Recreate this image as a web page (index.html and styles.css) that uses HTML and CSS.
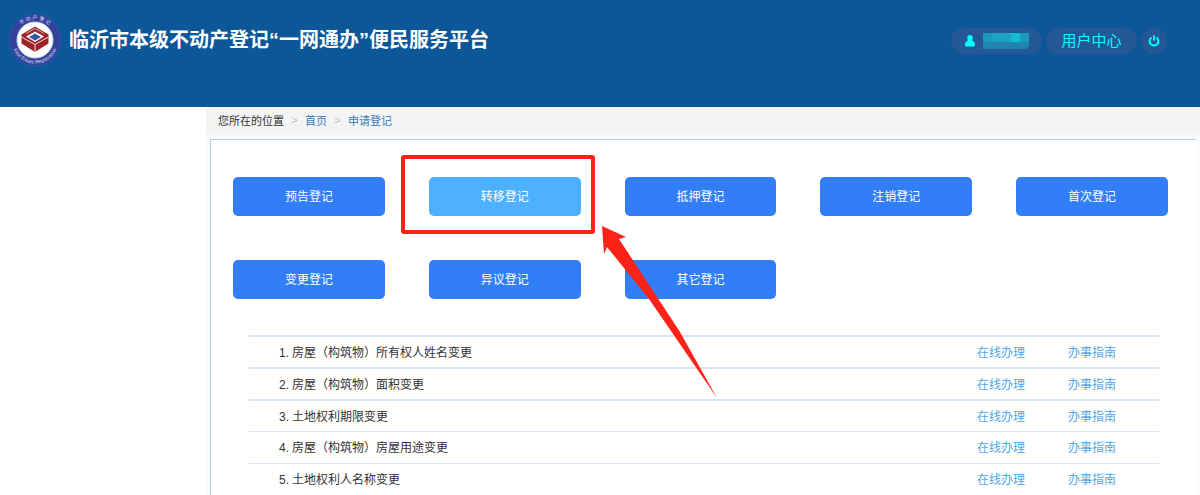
FILE: index.html
```
<!DOCTYPE html>
<html lang="zh-CN">
<head>
    <meta charset="UTF-8">
    <meta name="viewport" content="width=device-width, initial-scale=1.0">
    <title>临沂市本级不动产登记“一网通办”便民服务平台</title>
    <link rel="stylesheet" href="styles.css">
</head>
<body>
    <!-- 顶部 -->
    <header class="header">
        <div class="brand">
            <svg class="logo" viewBox="0 0 54 54" aria-hidden="true">
                <defs>
                    <path id="ringTop" d="M6.5 27a20.5 20.5 0 0 1 41 0"/>
                    <path id="ringBottom" d="M3.500 27a23.500 23.500 0 0 0 47 0"/>
                </defs>
                <circle cx="27" cy="27" r="26" fill="#33439c" stroke="#2a5aa5"/>
                <circle cx="27" cy="27" r="18" fill="#fff" stroke="#c9cfe8"/>
                <text class="logo-text"><textPath href="#ringTop" startOffset="50%" text-anchor="middle">不 动 产 登 记</textPath></text>
                <text class="logo-text"><textPath href="#ringBottom" startOffset="50%" text-anchor="middle">Real Estate Registration</textPath></text>
                <path d="M27 13.500l13.500 8v9L27 39l-13.500-8.500v-9z" fill="#9c2429"/>
                <path d="M27 18.500l9 5-9 5.500-9-5.500z" fill="#fff"/>
                <path d="M27 20.500l6 3.500-6 3.500-6-3.500z" fill="#3556a8"/>
                <path d="M18 20.500l9-5 9 5" fill="none" stroke="#d9a3a0"/>
                <path d="M13.500 24L27 31.500 40.500 24M27 31.500V39" fill="none" stroke="#f1d9d8"/>
            </svg>
            <h1 class="brand-title">临沂市本级不动产登记“一网通办”便民服务平台</h1>
        </div>
        <div class="user-bar">
            <a class="pill" href="#" aria-label="当前用户">
                <svg class="icon-user" viewBox="0 0 10 12" aria-hidden="true">
                    <path d="M5 0C3.200 0 2.300 1.300 2.300 3c0 1 .3 1.900.9 2.500C1.200 6 0 7.600 0 10c0 1 .6 1.500 1.500 1.500h7C9.400 11.500 10 11 10 10c0-2.400-1.200-4-3.200-4.500.6-.6.9-1.500.9-2.500C7.700 1.300 6.800 0 5 0z"/>
                </svg>
                <svg class="user-mask" viewBox="0 0 46 16" aria-hidden="true">
                    <path d="M0 0h46v13l-3 3H0z" fill="#1f86b2"/>
                    <path d="M0 0h46v9H0z" fill="#1ba3c4"/>
                    <path d="M0 0h9v9H0zM37 0h9v9h-9z" fill="#1b9abf"/>
                    <path d="M28 0h9v9h-9z" fill="#14bdd3"/>
                </svg>
            </a>
            <a class="pill pill-text" href="#">用户中心</a>
            <button class="pill pill-round" type="button" aria-label="退出">
                <svg class="icon-power" viewBox="0 0 12 12" aria-hidden="true">
                    <path d="M3.500 2.500a4.400 4.400 0 1 0 5 0M6 .5v5"/>
                </svg>
            </button>
        </div>
    </header>

    <!-- 主内容区域 -->
    <main class="main">
        <nav class="breadcrumb" aria-label="当前位置">
            <span>您所在的位置</span>
            <span class="sep">&gt;</span>
            <a href="#">首页</a>
            <span class="sep">&gt;</span>
            <a href="#">申请登记</a>
        </nav>

        <section class="panel">
            <!-- 登记类型 -->
            <div class="type-grid">
                <button class="type-btn" type="button">预告登记</button>
                <div class="type-current">
                    <button class="type-btn active" type="button">转移登记</button>
                    <div class="highlight">
                        <svg class="arrow" viewBox="0 0 116 172" aria-hidden="true">
                            <path d="M0 0l24 11-7 2 61 93 37 66-68-99L5 21l-3 7z"/>
                        </svg>
                    </div>
                </div>
                <button class="type-btn" type="button">抵押登记</button>
                <button class="type-btn" type="button">注销登记</button>
                <button class="type-btn" type="button">首次登记</button>
                <button class="type-btn" type="button">变更登记</button>
                <button class="type-btn" type="button">异议登记</button>
                <button class="type-btn" type="button">其它登记</button>
            </div>

            <!-- 办理事项 -->
            <table class="item-table">
                <tbody>
                    <tr>
                        <td class="item-name"><span class="num">1.</span>房屋（构筑物）所有权人姓名变更</td>
                        <td><a href="#">在线办理</a></td>
                        <td><a href="#">办事指南</a></td>
                    </tr>
                    <tr>
                        <td class="item-name"><span class="num">2.</span>房屋（构筑物）面积变更</td>
                        <td><a href="#">在线办理</a></td>
                        <td><a href="#">办事指南</a></td>
                    </tr>
                    <tr>
                        <td class="item-name"><span class="num">3.</span>土地权利期限变更</td>
                        <td><a href="#">在线办理</a></td>
                        <td><a href="#">办事指南</a></td>
                    </tr>
                    <tr>
                        <td class="item-name"><span class="num">4.</span>房屋（构筑物）房屋用途变更</td>
                        <td><a href="#">在线办理</a></td>
                        <td><a href="#">办事指南</a></td>
                    </tr>
                    <tr>
                        <td class="item-name"><span class="num">5.</span>土地权利人名称变更</td>
                        <td><a href="#">在线办理</a></td>
                        <td><a href="#">办事指南</a></td>
                    </tr>
                </tbody>
            </table>
        </section>
    </main>
</body>
</html>
```
FILE: styles.css
```
* {
    margin: 0;
    padding: 0;
    box-sizing: border-box;
}

body {
    font-family: "Liberation Sans", "Noto Sans CJK SC", sans-serif;
    font-size: 12px;
    color: #333;
    background: #fff;
    display: flex;
    flex-direction: column;
    height: 100vh;
    overflow: hidden;
}

a {
    text-decoration: none;
}

button {
    font-family: inherit;
    border: none;
    cursor: pointer;
}

/* 顶部 */
.header {
    display: flex;
    justify-content: space-between;
    align-items: flex-start;
    flex-shrink: 0;
    height: 107px;
    padding: 13px 33px 0 8px;
    background: #0b5798;
}

.brand {
    display: flex;
    align-items: center;
    gap: 7px;
}

.logo {
    width: 54px;
    height: 54px;
}

.logo-text {
    fill: #d5dbf2;
    font-size: 5px;
}

.brand-title {
    font-size: 20px;
    line-height: 24px;
    font-weight: bold;
    color: #fff;
}

.user-bar {
    display: flex;
    gap: 4px;
    padding-top: 15px;
}

.pill {
    display: flex;
    align-items: center;
    justify-content: center;
    gap: 8px;
    min-width: 91px;
    height: 26px;
    border-radius: 13px;
    background: #235796;
    color: #0ff;
    font-size: 15px;
}

.pill-text {
    padding-bottom: 4px;
}

.pill-round {
    min-width: 26px;
    width: 26px;
}

.icon-user {
    width: 10px;
    height: 12px;
    fill: #0ff;
}

.user-mask {
    width: 46px;
    height: 16px;
}

.icon-power {
    width: 12px;
    height: 12px;
    fill: none;
    stroke: #0ff;
    stroke-width: 2;
}

/* 主内容区域 */
.main {
    display: flex;
    flex-direction: column;
    flex: 1;
    min-height: 0;
    margin-left: 206px;
    padding: 0 4px;
    background: #f9fafc;
}

.breadcrumb {
    display: flex;
    align-items: center;
    flex-shrink: 0;
    height: 28px;
    margin: 0 -4px 4px;
    padding: 0 12px 2px;
    background: #f4f4f4;
    font-size: 11px;
}

.breadcrumb a {
    color: #337ab7;
}

.breadcrumb .sep {
    width: 21px;
    text-align: center;
    color: #bbb;
}

.panel {
    flex: 1;
    padding: 37px 28px 0 22px;
    background: #fff;
    border-top: 1px solid #b3cede;
    border-left: 1px solid #b3cede;
}

/* 登记类型 */
.type-grid {
    display: grid;
    grid-template-columns: repeat(5, 1fr);
    gap: 44px;
}

.type-btn {
    width: 100%;
    height: 39px;
    padding-bottom: 2px;
    border-radius: 5px;
    background: #317ef7;
    color: #fff;
    font-size: 12px;
}

.type-btn.active {
    background: #4db1ff;
}

.type-current {
    position: relative;
}

/* 红框和箭头 */
.highlight {
    position: absolute;
    inset: -22px -14px -18px -28px;
    border: 4px solid #fc2217;
    border-radius: 3px;
    pointer-events: none;
}

.arrow {
    position: absolute;
    top: 67px;
    left: 197px;
    width: 116px;
    height: 172px;
    fill: #fc2217;
}

/* 办理事项 */
.item-table {
    width: calc(100% - 25px);
    margin: 36px 9px 0 16px;
    table-layout: fixed;
    border-collapse: separate;
    border-spacing: 0;
}

.item-table td {
    width: 10%;
    height: 32px;
    padding-bottom: 2px;
    border-top: 2px solid #d2e5f1;
    vertical-align: middle;
}

.item-table tr:nth-child(n+4) td {
    border-top-width: 1px;
}

.item-table .item-name {
    width: 80%;
    padding-left: 30px;
}

.item-table a {
    color: #4ba7e8;
}

.num {
    display: inline-block;
    width: 13px;
}
```
